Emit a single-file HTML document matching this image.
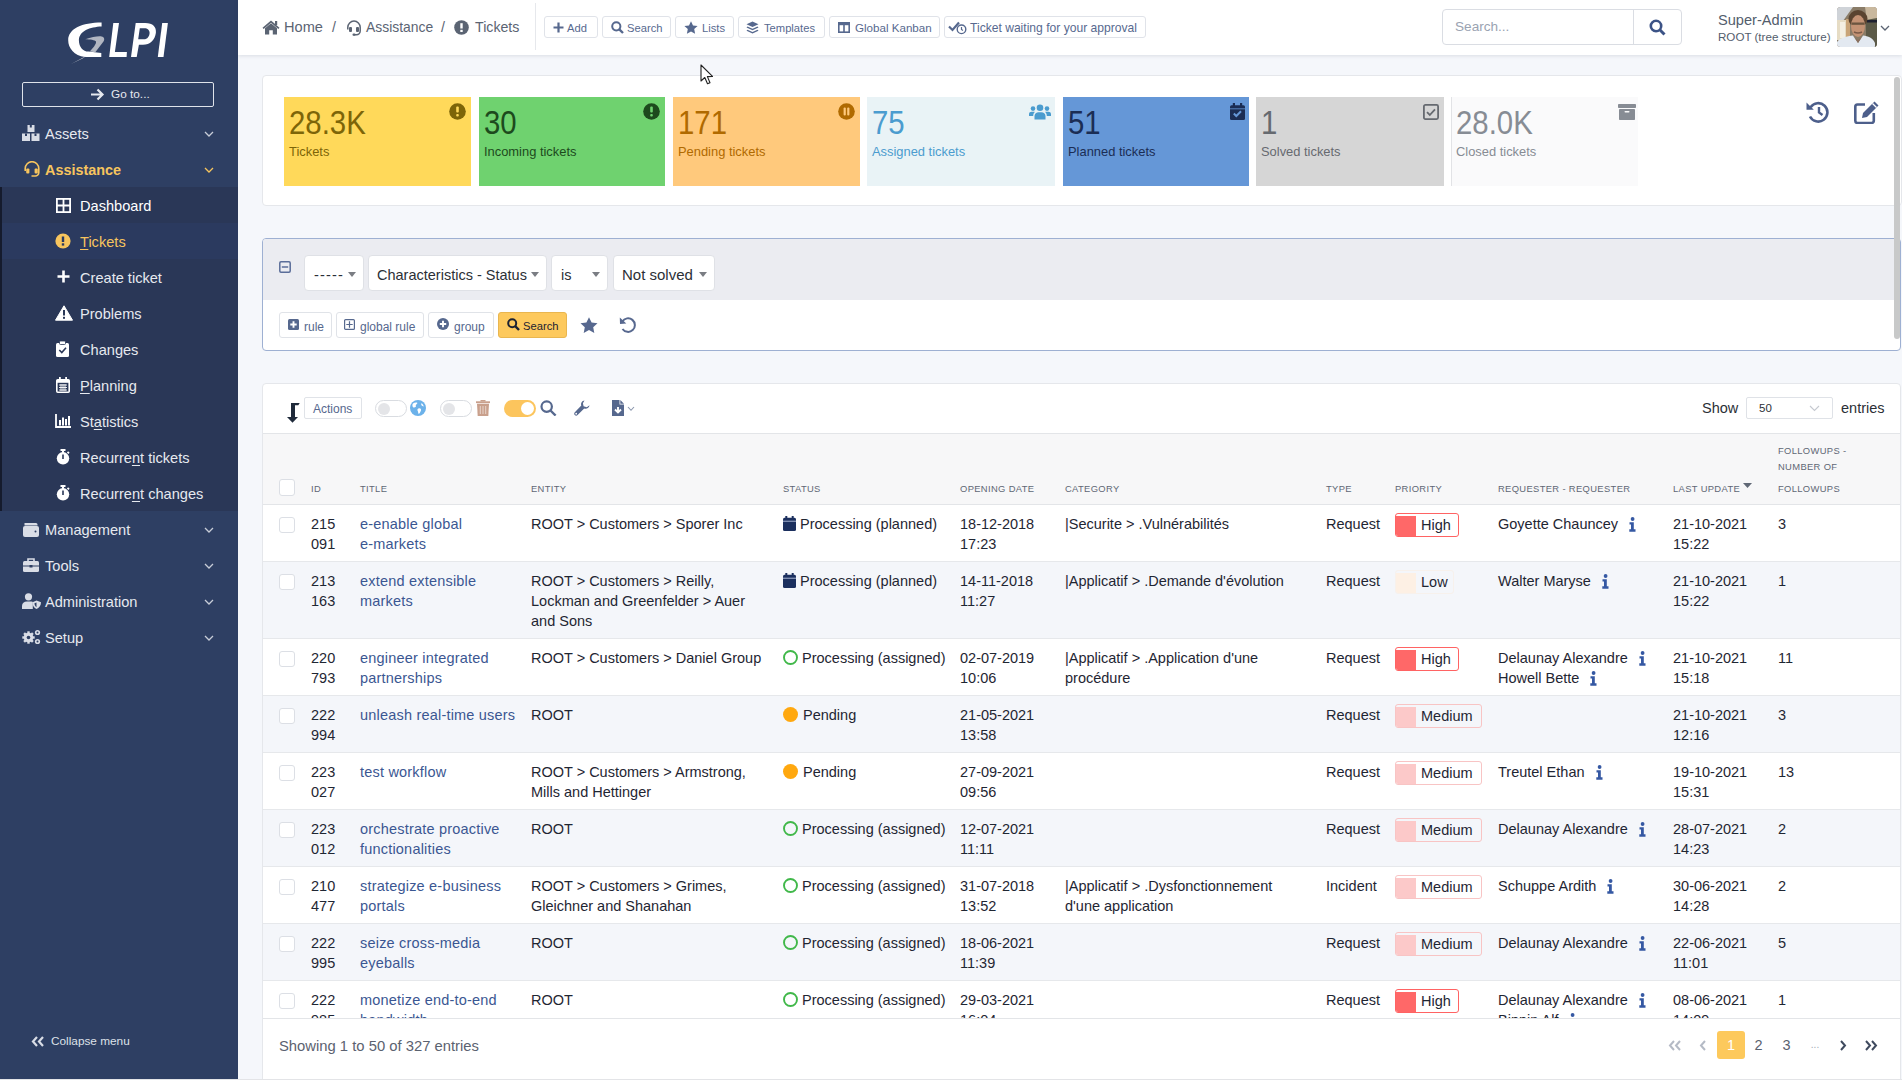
<!DOCTYPE html>
<html><head><meta charset="utf-8">
<style>
*{box-sizing:border-box;margin:0;padding:0}
html,body{width:1902px;height:1080px;overflow:hidden}
body{font-family:"Liberation Sans",sans-serif;background:#f5f7fb;position:relative;color:#1e293b}
svg{display:block;position:absolute}
.a{position:absolute;white-space:nowrap}
/* sidebar */
#sb{position:absolute;left:0;top:0;width:238px;height:1080px;background:#2e3f63;overflow:hidden}
#sb .it{position:absolute;left:0;width:238px;height:36px;color:#e6e9ef;font-size:14.6px;line-height:36px}
#sb .it svg{left:22px;top:10px}
#sb .it .tx{position:absolute;left:45px;top:1px}
#sb .it .chev{left:204px;top:16px}
#sub{position:absolute;left:0;top:187px;width:238px;height:324px;background:#2a3757}
#sub .strip{position:absolute;left:0;top:0;width:2px;height:324px;background:#151b2d;z-index:2}
#sub .it .tx{left:80px}
#sub .it svg{left:55px}
/* header */
#hd{position:absolute;left:238px;top:0;width:1664px;height:55px;background:#fff;box-shadow:0 1px 4px rgba(40,50,70,.13)}
.crumb{position:absolute;top:0;height:55px;line-height:55px;font-size:14.2px;color:#5b6473;white-space:nowrap}
.hbtn{position:absolute;top:16px;height:22px;border:1px solid #e0e3e9;border-radius:3px;background:#fff;color:#57698f;font-size:11.2px;line-height:20px;white-space:nowrap}
.hbtn span{position:absolute;top:1px}
/* cards */
.card{position:absolute;background:#fff;border:1px solid #e5e7eb;border-radius:4px}
.tile{position:absolute;top:97px;width:187px;height:89px}
.tile .num{position:absolute;left:5px;top:8px;font-size:29.5px;line-height:34px;white-space:nowrap}
.tile .lbl{position:absolute;left:5px;top:46.8px;font-size:12.9px;line-height:16px;white-space:nowrap}
.tile svg{left:164px;top:6px}
</style></head><body>
<div id="sb">
<svg style="left:60px;top:15px" width="120" height="55" viewBox="0 0 120 55">
<path fill="#fff" d="M41.6,7.6 L41.6,11.4 C30,11.8 19,16 18.9,25.2 C19,32 23,36.5 28.4,36.6 L41.3,37.9 L41.3,42 L25,42 C14,40.5 8.2,33 8.2,25.2 C8.2,14 22,7.6 41.6,7.6 Z"/>
<path fill="#c9ccd4" d="M27,40.6 L11,48.9 L22.5,43.4 Z"/>
<path fill="#b1b6c1" d="M25.2,24.3 C32,22 38,21 41.6,21.5 C44.5,22 44.8,24.5 43.5,26.5 L35.3,37.2 L29.7,36.6 C33,33 36.5,29 36,26.5 C35,25 30,24.5 25.2,24.3 Z"/>
<path fill="#fff" d="M53.3,7.9 L59,7.9 L54.9,36.9 L66.9,36.9 L66.6,42 L49.2,42 Z"/>
<path fill="#fff" fill-rule="evenodd" d="M75.7,7.9 L85.2,7.9 C93,7.9 96.5,12 95.9,17.7 C95,25 90,29.7 83,29.7 L78.9,29.7 L76.7,42 L71,42 Z M79.8,13.2 L78.2,24.3 L83.9,24.3 C87.5,24.3 89.6,21 89.6,17.7 C89.6,15 87.5,13.2 84.5,13.2 Z"/>
<path fill="#fff" d="M102.2,7.9 L107.9,7.9 L103.5,42 L97.8,42 Z"/>
</svg>
<div class="a" style="left:22px;top:82px;width:192px;height:25px;border:1px solid #dfe3ea;border-radius:2px"></div>
<svg style="left:89px;top:87px" width="16" height="15" viewBox="0 0 16 15"><path d="M2,7.5 H13 M8.5,2.5 L13.5,7.5 L8.5,12.5" stroke="#e6e9ef" stroke-width="2.2" fill="none"/></svg>
<div class="a" style="left:111px;top:82px;line-height:25px;font-size:11.8px;color:#e6e9ef">Go to...</div>

<div class="it" style="top:115px">
<svg width="18" height="16" viewBox="0 0 18 16" fill="#d9dde6"><rect x="5.5" y="0" width="7" height="7"/><rect x="0" y="8.5" width="8" height="7.5"/><rect x="9.5" y="8.5" width="8" height="7.5"/><rect x="7.8" y="0" width="2" height="2.5" fill="#2e3f63"/><rect x="3" y="8.5" width="2" height="2.5" fill="#2e3f63"/><rect x="12.5" y="8.5" width="2" height="2.5" fill="#2e3f63"/></svg>
<span class="tx">Assets</span>
<svg class="chev" width="10" height="6" viewBox="0 0 10 6"><path d="M1,1 L5,5 L9,1" stroke="#c8cdd8" stroke-width="1.3" fill="none"/></svg>
</div>
<div class="it" style="top:151px;color:#f7c55e;font-weight:bold;font-size:14.4px">
<svg width="18" height="16" viewBox="0 0 18 16" style="left:23px"><path d="M2.2,10 V7.5 A6.8,6.8 0 0 1 15.8,7.5 V11.5 A3.5,3.5 0 0 1 12.3,15 H8.5" stroke="#f7c55e" stroke-width="1.6" fill="none"/><rect x="3.2" y="7.5" width="3.2" height="5" rx="1" fill="#f7c55e"/><rect x="11.6" y="7.5" width="3.2" height="5" rx="1" fill="#f7c55e"/></svg>
<span class="tx">Assistance</span>
<svg class="chev" width="10" height="6" viewBox="0 0 10 6"><path d="M1,1 L5,5 L9,1" stroke="#f7c55e" stroke-width="1.3" fill="none"/></svg>
</div>

<div id="sub"><div class="strip"></div>
<div class="it" style="top:0px;color:#fff">
<svg width="16" height="16" viewBox="0 0 16 16" style="top:11px;left:56px"><rect x="0.9" y="0.9" width="13.2" height="13.2" stroke="#fff" stroke-width="1.8" fill="none"/><path d="M7.5,1 V14 M1,7.5 H14" stroke="#fff" stroke-width="1.8"/></svg>
<span class="tx">Dashboard</span></div>
<div class="it" style="top:36px;background:#2b3a5f;color:#f7c55e">
<svg width="16" height="16" viewBox="0 0 16 16" style="top:10px;left:55px"><circle cx="8" cy="8" r="7.6" fill="#f7c55e"/><rect x="6.8" y="3.5" width="2.4" height="5.5" fill="#2b3a5f"/><rect x="6.8" y="10.3" width="2.4" height="2.3" fill="#2b3a5f"/></svg>
<span class="tx"><u style="text-underline-offset:2px">T</u>ickets</span></div>
<div class="it" style="top:72px">
<svg width="16" height="16" viewBox="0 0 16 16" style="top:10px;left:56px"><path d="M7.5,1.5 V13.5 M1.5,7.5 H13.5" stroke="#fff" stroke-width="2.6"/></svg>
<span class="tx">Create ticket</span></div>
<div class="it" style="top:108px">
<svg width="18" height="16" viewBox="0 0 18 16" style="top:10px;left:55px"><path d="M9,0.8 L17.5,15.2 H0.5 Z" fill="#fff" stroke="#fff" stroke-width="1" stroke-linejoin="round"/><rect x="8" y="5" width="2" height="5.5" fill="#2a3757"/><rect x="8" y="11.8" width="2" height="2" fill="#2a3757"/></svg>
<span class="tx">Problems</span></div>
<div class="it" style="top:144px">
<svg width="14" height="16" viewBox="0 0 14 16" style="top:10px;left:56px"><rect x="0" y="2" width="13" height="14" rx="1.5" fill="#fff"/><rect x="3.5" y="0" width="6" height="3.5" rx="1" fill="#fff" stroke="#2a3757" stroke-width="0.8"/><path d="M3.3,9 L5.8,11.5 L10,6.8" stroke="#2a3757" stroke-width="1.6" fill="none"/></svg>
<span class="tx">Changes</span></div>
<div class="it" style="top:180px">
<svg width="14" height="16" viewBox="0 0 14 16" style="top:10px;left:56px"><rect x="0.8" y="2.8" width="12.4" height="12.4" rx="1" stroke="#fff" stroke-width="1.6" fill="none"/><rect x="0.8" y="2.8" width="12.4" height="3" fill="#fff"/><rect x="3" y="0" width="1.8" height="3.5" fill="#fff"/><rect x="9.2" y="0" width="1.8" height="3.5" fill="#fff"/><path d="M3,8 H11 M3,10.5 H11 M3,13 H11 M5,7 V14 M7,7 V14 M9,7 V14" stroke="#fff" stroke-width="0.9"/></svg>
<span class="tx"><u style="text-underline-offset:2px">P</u>lanning</span></div>
<div class="it" style="top:216px">
<svg width="16" height="14" viewBox="0 0 16 14" style="top:11px;left:55px"><path d="M1,0 V13 H16" stroke="#fff" stroke-width="1.8" fill="none"/><rect x="4" y="6" width="2" height="5.5" fill="#fff"/><rect x="7" y="3.5" width="2" height="8" fill="#fff"/><rect x="10" y="5" width="2" height="6.5" fill="#fff"/><rect x="13" y="2" width="2" height="9.5" fill="#fff"/></svg>
<span class="tx">St<u style="text-underline-offset:2px">a</u>tistics</span></div>
<div class="it" style="top:252px">
<svg width="14" height="16" viewBox="0 0 14 16" style="top:10px;left:56px"><circle cx="7" cy="9.3" r="6.2" fill="#fff"/><rect x="4.5" y="0" width="5" height="2" fill="#fff"/><rect x="6" y="1" width="2" height="3" fill="#fff"/><rect x="6.2" y="5.5" width="1.6" height="4.5" fill="#2a3757"/><path d="M11.5,2.8 L13,4.3" stroke="#fff" stroke-width="1.8"/></svg>
<span class="tx">Recurre<u style="text-underline-offset:2px">n</u>t tickets</span></div>
<div class="it" style="top:288px">
<svg width="14" height="16" viewBox="0 0 14 16" style="top:10px;left:56px"><circle cx="7" cy="9.3" r="6.2" fill="#fff"/><rect x="4.5" y="0" width="5" height="2" fill="#fff"/><rect x="6" y="1" width="2" height="3" fill="#fff"/><rect x="6.2" y="5.5" width="1.6" height="4.5" fill="#2a3757"/><path d="M11.5,2.8 L13,4.3" stroke="#fff" stroke-width="1.8"/></svg>
<span class="tx">Recurre<u style="text-underline-offset:2px">n</u>t changes</span></div>
</div>

<div class="it" style="top:511px">
<svg width="16" height="14" viewBox="0 0 16 14" style="top:12px;left:23px"><path d="M1.5,0 H13 A1.5,1.5 0 0 1 14.5,1.5 V2.5 H1.5 Z" fill="#d9dde6"/><rect x="0" y="3" width="16" height="11" rx="2" fill="#d9dde6"/><circle cx="12.5" cy="8.5" r="1" fill="#2e3f63"/></svg>
<span class="tx">Management</span>
<svg class="chev" width="10" height="6" viewBox="0 0 10 6"><path d="M1,1 L5,5 L9,1" stroke="#c8cdd8" stroke-width="1.3" fill="none"/></svg>
</div>
<div class="it" style="top:547px">
<svg width="16" height="14" viewBox="0 0 16 14" style="top:11px;left:23px"><path d="M5,3 V1 H11 V3" stroke="#d9dde6" stroke-width="1.6" fill="none"/><rect x="0" y="3" width="16" height="11" rx="1.5" fill="#d9dde6"/><path d="M0,8 H16" stroke="#2e3f63" stroke-width="1"/><rect x="6.5" y="7" width="3" height="2.5" fill="#2e3f63"/></svg>
<span class="tx">Tools</span>
<svg class="chev" width="10" height="6" viewBox="0 0 10 6"><path d="M1,1 L5,5 L9,1" stroke="#c8cdd8" stroke-width="1.3" fill="none"/></svg>
</div>
<div class="it" style="top:583px">
<svg width="19" height="16" viewBox="0 0 19 16" style="top:10px;left:22px"><circle cx="6.5" cy="3.8" r="3.6" fill="#d9dde6"/><path d="M0,16 V13 C0,10 2,8.5 5,8.5 H9 C10,8.5 10.5,8.8 10.8,9 V16 Z" fill="#d9dde6"/><path d="M14.5,7.5 L19,9.3 C19,13 17,15 14.5,16 C12,15 10.5,13 10.5,9.3 Z" fill="#d9dde6"/><path d="M14.5,9.5 V14.3 C13.3,13.5 12.5,12 12.5,10.3 Z" fill="#2e3f63"/></svg>
<span class="tx">Administration</span>
<svg class="chev" width="10" height="6" viewBox="0 0 10 6"><path d="M1,1 L5,5 L9,1" stroke="#c8cdd8" stroke-width="1.3" fill="none"/></svg>
</div>
<div class="it" style="top:619px">
<svg width="19" height="16" viewBox="0 0 19 16" style="top:10px;left:22px"><g fill="#d9dde6"><circle cx="6.5" cy="8.5" r="4.8"/><rect x="5.3" y="2.3" width="2.4" height="12.4"/><rect x="0.3" y="7.3" width="12.4" height="2.4"/><rect x="5.3" y="2.3" width="2.4" height="12.4" transform="rotate(45 6.5 8.5)"/><rect x="5.3" y="2.3" width="2.4" height="12.4" transform="rotate(-45 6.5 8.5)"/><circle cx="15.5" cy="3.5" r="2.6"/><circle cx="15.5" cy="12.5" r="2.6"/></g><circle cx="6.5" cy="8.5" r="1.8" fill="#2e3f63"/><circle cx="15.5" cy="3.5" r="1" fill="#2e3f63"/><circle cx="15.5" cy="12.5" r="1" fill="#2e3f63"/></svg>
<span class="tx">Setup</span>
<svg class="chev" width="10" height="6" viewBox="0 0 10 6"><path d="M1,1 L5,5 L9,1" stroke="#c8cdd8" stroke-width="1.3" fill="none"/></svg>
</div>

<svg style="left:31px;top:1036px" width="14" height="11" viewBox="0 0 14 11"><path d="M6,1 L2,5.5 L6,10 M12,1 L8,5.5 L12,10" stroke="#d9dde6" stroke-width="2.2" fill="none"/></svg>
<div class="a" style="left:51px;top:1032px;line-height:18px;font-size:11.8px;color:#dde1e8">Collapse menu</div>
</div>
<div id="hd"></div>
<!-- breadcrumbs -->
<svg style="left:262px;top:20px" width="18" height="15" viewBox="0 0 18 15"><path d="M9,0.5 L17.5,7.8 L16.3,9 L9,2.8 L1.7,9 L0.5,7.8 Z" fill="#5b6473"/><path d="M3,8.3 L9,3.3 L15,8.3 V14.5 H10.8 V10.3 H7.2 V14.5 H3 Z" fill="#5b6473"/><rect x="13" y="1" width="2.2" height="4" fill="#5b6473"/></svg>
<div class="crumb" style="left:284px;font-size:14.6px">Home</div>
<div class="crumb" style="left:332px">/</div>
<svg style="left:346px;top:20px" width="16" height="16" viewBox="0 0 16 16"><path d="M1.8,9.5 V7.3 A6.2,6.2 0 0 1 14.2,7.3 V11 A3.8,3.8 0 0 1 10.4,14.8 H7.5" stroke="#5b6473" stroke-width="1.5" fill="none"/><rect x="3" y="7" width="3" height="5" rx="1" fill="#5b6473"/><rect x="10" y="7" width="3" height="5" rx="1" fill="#5b6473"/><rect x="6.5" y="13.5" width="3" height="2.2" rx="1" fill="#5b6473"/></svg>
<div class="crumb" style="left:366px;font-size:13.9px">Assistance</div>
<div class="crumb" style="left:441px">/</div>
<svg style="left:454px;top:20px" width="15" height="15" viewBox="0 0 15 15"><circle cx="7.5" cy="7.5" r="7.3" fill="#5b6473"/><rect x="6.3" y="3.2" width="2.4" height="5.3" fill="#fff"/><rect x="6.3" y="9.8" width="2.4" height="2.2" fill="#fff"/></svg>
<div class="crumb" style="left:475px">Tickets</div>
<div class="a" style="left:535px;top:3px;width:1px;height:47px;background:#e6e8ec"></div>

<div class="hbtn" style="left:544px;width:54px"><span style="left:22px">Add</span></div>
<svg style="left:553px;top:22px" width="11" height="11" viewBox="0 0 11 11"><path d="M5.5,0.5 V10.5 M0.5,5.5 H10.5" stroke="#56688e" stroke-width="2.2"/></svg>
<div class="hbtn" style="left:602px;width:69px"><span style="left:24px">Search</span></div>
<svg style="left:611px;top:21px" width="13" height="13" viewBox="0 0 13 13"><circle cx="5.3" cy="5.3" r="4.1" stroke="#56688e" stroke-width="2" fill="none"/><path d="M8.3,8.3 L12,12" stroke="#56688e" stroke-width="2.4"/></svg>
<div class="hbtn" style="left:675px;width:59px"><span style="left:26px">Lists</span></div>
<svg style="left:684px;top:21px" width="14" height="13" viewBox="0 0 14 13"><path d="M7,0.3 L9,4.5 L13.6,5 L10.2,8.1 L11.1,12.7 L7,10.4 L2.9,12.7 L3.8,8.1 L0.4,5 L5,4.5 Z" fill="#56688e"/></svg>
<div class="hbtn" style="left:738px;width:87px"><span style="left:25px">Templates</span></div>
<svg style="left:746px;top:21px" width="13" height="13" viewBox="0 0 13 13"><path d="M6.5,0.5 L12.5,3.3 L6.5,6.1 L0.5,3.3 Z" fill="#56688e"/><path d="M1.5,5.5 L6.5,7.8 L11.5,5.5 L12.5,6.5 L6.5,9.3 L0.5,6.5 Z" fill="#56688e"/><path d="M1.5,8.7 L6.5,11 L11.5,8.7 L12.5,9.7 L6.5,12.5 L0.5,9.7 Z" fill="#56688e"/></svg>
<div class="hbtn" style="left:829px;width:111px"><span style="left:25px;font-size:11.6px">Global Kanban</span></div>
<svg style="left:838px;top:22px" width="12" height="11" viewBox="0 0 12 11"><rect x="0.8" y="0.8" width="10.4" height="9.4" stroke="#56688e" stroke-width="1.6" fill="none"/><path d="M6,1 V10" stroke="#56688e" stroke-width="1.6"/><rect x="0.8" y="0.8" width="10.4" height="2.4" fill="#56688e"/></svg>
<div class="hbtn" style="left:944px;width:202px"><span style="left:25px;font-size:12.1px">Ticket waiting for your approval</span></div>
<svg style="left:948px;top:20px" width="20" height="15" viewBox="0 0 20 15"><path d="M1,6.5 L4.5,10 L11,2.5" stroke="#56688e" stroke-width="2.2" fill="none"/><circle cx="13.5" cy="9.3" r="4.3" stroke="#56688e" stroke-width="1.4" fill="#fff"/><path d="M13.5,7 V9.5 L15,10.5" stroke="#56688e" stroke-width="1.2" fill="none"/></svg>

<!-- global search -->
<div class="a" style="left:1442px;top:9px;width:240px;height:36px;border:1px solid #dadde3;border-radius:4px;background:#fff"></div>
<div class="a" style="left:1633px;top:10px;width:1px;height:34px;background:#dadde3"></div>
<div class="a" style="left:1455px;top:9px;line-height:36px;font-size:13.6px;color:#9aa3b2">Search...</div>
<svg style="left:1649px;top:19px" width="17" height="17" viewBox="0 0 17 17"><circle cx="7" cy="7" r="5.2" stroke="#3c5386" stroke-width="2.6" fill="none"/><path d="M10.8,10.8 L15.5,15.5" stroke="#3c5386" stroke-width="3"/></svg>
<div class="a" style="left:1718px;top:10px;line-height:20px;font-size:14.6px;color:#535d6c">Super-Admin</div>
<div class="a" style="left:1718px;top:27.5px;line-height:17px;font-size:11.6px;color:#535d6c">ROOT (tree structure)</div>
<svg style="left:1837px;top:7px" width="40" height="40" viewBox="0 0 40 40">
<defs><clipPath id="av"><rect width="40" height="40" rx="3.5"/></clipPath></defs>
<g clip-path="url(#av)">
<rect width="40" height="40" fill="#8a7c68"/>
<path d="M0,0 H16 L6,14 L0,16 Z" fill="#cfd3d8"/>
<rect x="0" y="13" width="12" height="20" fill="#e6dcc4"/>
<rect x="3" y="15" width="5" height="16" fill="#f4efe2"/>
<rect x="9" y="12" width="4" height="22" fill="#c9a478"/>
<path d="M28,0 H40 V12 L30,14 Z" fill="#c9b89e"/>
<path d="M29,13 L40,11 V40 H29 Z" fill="#5c5a48"/>
<rect x="30" y="13" width="10" height="2.5" fill="#1e2030"/>
<ellipse cx="21" cy="12" rx="9.5" ry="9" fill="#5a4430"/>
<ellipse cx="21" cy="19" rx="7" ry="11" fill="#c39274"/>
<rect x="14.5" y="15.5" width="13" height="2.3" fill="#6b5540"/>
<path d="M17,25 Q21,27 25,25" stroke="#7a5a48" stroke-width="1.6" fill="none"/>
<path d="M0,40 V35 C3,31 10,29 16,28.5 L21,36 L26,28.5 C31,29 36,31 38,36 V40 Z" fill="#e3e9f1"/>
<path d="M16,28.5 L21,36 L26,28.5 L24,31 L21,33 L18,31 Z" fill="#8a7060"/>
</g></svg>
<svg style="left:1880px;top:25px" width="10" height="6" viewBox="0 0 10 6"><path d="M1,1 L5,5 L9,1" stroke="#5b6473" stroke-width="1.3" fill="none"/></svg>
<div class="card" style="left:262px;top:75px;width:1640px;height:131px"></div>
<style>
.tile .num{transform:scaleX(.89);transform-origin:0 0;font-size:33px;left:5px;top:7.5px;line-height:36px}
</style>
<div class="tile" style="left:284px;background:#ffd95a;color:#7d6508"><div class="num">28.3K</div><div class="lbl">Tickets</div>
<svg style="left:165px;top:6px" width="17" height="17" viewBox="0 0 17 17"><circle cx="8.5" cy="8.5" r="8.3" fill="#7d6508"/><rect x="7.2" y="3.6" width="2.6" height="6" rx="1" fill="#ffd95a"/><rect x="7.2" y="11" width="2.6" height="2.4" rx="1" fill="#ffd95a"/></svg></div>
<div class="tile" style="left:479px;width:186px;background:#6fd26f;color:#1d4a1d"><div class="num">30</div><div class="lbl">Incoming tickets</div>
<svg style="left:164px;top:6px" width="17" height="17" viewBox="0 0 17 17"><circle cx="8.5" cy="8.5" r="8.3" fill="#1d4a1d"/><rect x="7.2" y="3.6" width="2.6" height="6" rx="1" fill="#6fd26f"/><rect x="7.2" y="11" width="2.6" height="2.4" rx="1" fill="#6fd26f"/></svg></div>
<div class="tile" style="left:673px;background:#ffc97c;color:#b06a00"><div class="num">171</div><div class="lbl">Pending tickets</div>
<svg style="left:165px;top:6px" width="17" height="17" viewBox="0 0 17 17"><circle cx="8.5" cy="8.5" r="8.3" fill="#b06a00"/><rect x="5.6" y="4.6" width="2.2" height="7.8" rx="1" fill="#ffc97c"/><rect x="9.2" y="4.6" width="2.2" height="7.8" rx="1" fill="#ffc97c"/></svg></div>
<div class="tile" style="left:867px;width:188px;background:#e9f3f6;color:#4b9ccf"><div class="num">75</div><div class="lbl">Assigned tickets</div>
<svg style="left:162px;top:7px" width="22" height="16" viewBox="0 0 22 16" fill="#4b9ccf"><circle cx="11" cy="3.8" r="3.3"/><circle cx="4" cy="4.6" r="2.3"/><circle cx="18" cy="4.6" r="2.3"/><path d="M5.5,15.5 V12 C5.5,9.5 7.5,8.2 9.5,8.2 H12.5 C14.5,8.2 16.5,9.5 16.5,12 V15.5 Z"/><path d="M0,12 V10.3 C0,8.5 1.3,7.8 2.6,7.8 H4.8 C5.2,7.8 5.6,7.9 5.9,8.1 C4.7,9 4.2,10.3 4.2,12 Z"/><path d="M22,12 V10.3 C22,8.5 20.7,7.8 19.4,7.8 H17.2 C16.8,7.8 16.4,7.9 16.1,8.1 C17.3,9 17.8,10.3 17.8,12 Z"/></svg></div>
<div class="tile" style="left:1063px;width:186px;background:#6597d7;color:#1b2d54"><div class="num">51</div><div class="lbl">Planned tickets</div>
<svg style="left:167px;top:6px" width="15" height="17" viewBox="0 0 15 17"><rect x="0" y="2.3" width="15" height="14.7" rx="1.5" fill="#1b2d54"/><rect x="2.8" y="0" width="2.2" height="3.5" fill="#1b2d54"/><rect x="10" y="0" width="2.2" height="3.5" fill="#1b2d54"/><path d="M0,5.8 H15" stroke="#6597d7" stroke-width="0.8"/><path d="M3.8,10.5 L6.3,13 L11,8.3" stroke="#6597d7" stroke-width="2" fill="none"/></svg></div>
<div class="tile" style="left:1256px;width:188px;background:#d6d6d6;color:#666a70"><div class="num">1</div><div class="lbl">Solved tickets</div>
<svg style="left:167px;top:7px" width="16" height="16" viewBox="0 0 16 16"><rect x="0.9" y="0.9" width="14.2" height="14.2" rx="1.5" stroke="#666a70" stroke-width="1.8" fill="none"/><path d="M4,8.2 L6.8,11 L12,5.3" stroke="#666a70" stroke-width="1.8" fill="none"/></svg></div>
<div class="tile" style="left:1451px;background:#fafafb;color:#878c94;border-left:1px solid #e2e3e6"><div class="num" style="left:4px">28.0K</div><div class="lbl" style="left:4px">Closed tickets</div>
<svg style="left:166px;top:7px" width="18" height="16" viewBox="0 0 18 16"><rect x="0" y="0" width="18" height="4" rx="0.8" fill="#878c94"/><rect x="1" y="5" width="16" height="11" rx="0.8" fill="#878c94"/><rect x="6.5" y="7" width="5" height="1.6" rx="0.8" fill="#fafafb"/></svg></div>
<svg style="left:1806px;top:101px" width="24" height="22" viewBox="0 0 24 22"><path d="M4.6,6.2 A9.2,9.2 0 1 1 4,15.5" stroke="#4d5f8b" stroke-width="2.6" fill="none"/><path d="M0.5,1.5 L7.8,8.8 L0.5,8.8 Z" fill="#4d5f8b"/><path d="M13,6 V11.5 L16.5,14" stroke="#4d5f8b" stroke-width="2.4" fill="none"/></svg>
<svg style="left:1854px;top:100px" width="26" height="24" viewBox="0 0 26 24"><path d="M11,4.5 H3.5 A2.3,2.3 0 0 0 1.3,6.8 V20.7 A2.3,2.3 0 0 0 3.5,23 H17.5 A2.3,2.3 0 0 0 19.8,20.7 V13" stroke="#4d5f8b" stroke-width="2.6" fill="none"/><path d="M20.5,1.5 L24.5,5.5 L13,17 L8,18 L9,13 Z" fill="#4d5f8b"/><path d="M18.5,3.5 L22.5,7.5" stroke="#fff" stroke-width="1.2"/></svg>
<div class="a" style="left:262px;top:238px;width:1639px;height:113px;border:1px solid #9eb0d2;border-radius:4px;background:#fff;overflow:hidden">
<div class="a" style="left:0;top:0;width:1639px;height:61px;background:#ebecf1"></div>
</div>
<svg style="left:279px;top:261px" width="12" height="12" viewBox="0 0 12 12"><rect x="0.8" y="0.8" width="10.4" height="10.4" rx="1.2" stroke="#5a6d99" stroke-width="1.5" fill="none"/><path d="M2.8,6 H9.2" stroke="#5a6d99" stroke-width="1.5"/></svg>
<style>
.sel{position:absolute;top:255px;height:36px;background:#fff;border:1px solid #dfe1e6;border-radius:4px;font-size:14.5px;line-height:34px;color:#2b2f36;white-space:nowrap}
.sel span{position:absolute;top:2px}
.sel i{position:absolute;top:16px;width:0;height:0;border-left:4px solid transparent;border-right:4px solid transparent;border-top:5px solid #7a7d83}
.sbtn{position:absolute;top:312px;height:26px;background:#fff;border:1px solid #e0e3e8;border-radius:3px;font-size:12px;line-height:24px;color:#56688e;white-space:nowrap}
.sbtn span{position:absolute;top:1.5px}
</style>
<div class="sel" style="left:304px;width:60px"><span style="left:9px;top:2px;letter-spacing:1.2px">-----</span><i style="left:43px"></i></div>
<div class="sel" style="left:368px;width:179px"><span style="left:8px">Characteristics - Status</span><i style="left:162px"></i></div>
<div class="sel" style="left:551px;width:57px"><span style="left:9px">is</span><i style="left:40px"></i></div>
<div class="sel" style="left:613px;width:102px"><span style="left:8px;font-size:15px">Not solved</span><i style="left:85px"></i></div>

<div class="sbtn" style="left:279px;width:53px"><span style="left:24px">rule</span></div>
<svg style="left:288px;top:319px" width="11" height="11" viewBox="0 0 11 11"><rect x="0" y="0" width="11" height="11" rx="1.5" fill="#56688e"/><path d="M5.5,2.3 V8.7 M2.3,5.5 H8.7" stroke="#fff" stroke-width="1.9"/></svg>
<div class="sbtn" style="left:336px;width:88px"><span style="left:23px">global rule</span></div>
<svg style="left:344px;top:319px" width="11" height="11" viewBox="0 0 11 11"><rect x="0.6" y="0.6" width="9.8" height="9.8" rx="1" stroke="#56688e" stroke-width="1.2" fill="none"/><path d="M5.5,2.3 V8.7 M2.3,5.5 H8.7" stroke="#56688e" stroke-width="1.2"/></svg>
<div class="sbtn" style="left:428px;width:66px"><span style="left:25px">group</span></div>
<svg style="left:437px;top:318px" width="12" height="12" viewBox="0 0 12 12"><circle cx="6" cy="6" r="6" fill="#56688e"/><path d="M6,2.8 V9.2 M2.8,6 H9.2" stroke="#fff" stroke-width="1.9"/></svg>
<div class="sbtn" style="left:498px;width:69px;background:#fdc95d;border-color:#e9b650;color:#1c2232"><span style="left:24px;top:0.5px;font-size:11.2px">Search</span></div>
<svg style="left:507px;top:318px" width="13" height="13" viewBox="0 0 13 13"><circle cx="5.2" cy="5.2" r="4" stroke="#1c2232" stroke-width="2" fill="none"/><path d="M8.2,8.2 L12,12" stroke="#1c2232" stroke-width="2.4"/></svg>
<svg style="left:580px;top:317px" width="18" height="16" viewBox="0 0 18 16"><path d="M9,0.3 L11.6,5.6 L17.5,6.3 L13.2,10.2 L14.3,16 L9,13.1 L3.7,16 L4.8,10.2 L0.5,6.3 L6.4,5.6 Z" fill="#57688f"/></svg>
<svg style="left:619px;top:317px" width="17" height="16" viewBox="0 0 17 16"><path d="M3.3,4.5 A6.8,6.8 0 1 1 3.5,12" stroke="#57688f" stroke-width="2" fill="none"/><path d="M0.8,0.5 L1,7 L7.3,6.5 Z" fill="#57688f"/></svg>
<div class="card" style="left:262px;top:383px;width:1639px;height:697px;border-radius:4px 4px 0 0"></div>
<style>
.tc{position:absolute;font-size:14.5px;line-height:20px;color:#1f2633;white-space:nowrap}
.tl{color:#3b5792;letter-spacing:.2px}
.th{position:absolute;font-size:9.4px;line-height:14px;color:#5f6775;letter-spacing:.35px;white-space:nowrap}
.cb{position:absolute;width:16px;height:16px;border:1px solid #dcdfe5;border-radius:3px;background:#fff}
.ii{position:absolute;width:7px;height:15px}
</style>

<div class="a" style="left:263px;top:433px;width:1637px;height:72px;background:#f7f7f8;border-top:1px solid #e3e5e8;border-bottom:1px solid #e3e5e8"></div>
<div class="a" style="left:263px;top:505px;width:1637px;height:513px;overflow:hidden">
<div class="a" style="left:0;top:0px;width:1637px;height:57px;background:#fff;border-bottom:1px solid #e6e8eb"></div>
<div class="cb" style="left:16px;top:12px"></div>
<div class="tc" style="left:48px;top:9px;">215<br>091</div>
<div class="tc tl" style="left:97px;top:9px;">e-enable global<br>e-markets</div>
<div class="tc" style="left:268px;top:9px;">ROOT &gt; Customers &gt; Sporer Inc</div>
<svg style="left:520px;top:11px" width="13" height="15" viewBox="0 0 13 15"><rect x="0" y="1.8" width="13" height="13.2" rx="1.5" fill="#1b2f5e"/><rect x="2.3" y="0" width="2" height="3" fill="#1b2f5e"/><rect x="8.7" y="0" width="2" height="3" fill="#1b2f5e"/><rect x="0" y="4.6" width="13" height="1.4" fill="#7e8db0"/></svg>
<div class="tc" style="left:537px;top:9px;">Processing (planned)</div>
<div class="tc" style="left:697px;top:9px;">18-12-2018<br>17:23</div>
<div class="tc" style="left:802px;top:9px;">|Securite &gt; .Vulnérabilités</div>
<div class="tc" style="left:1063px;top:9px;">Request</div>
<div class="a" style="left:1132px;top:8px;width:64px;height:24px;border:1px solid #ff6363;border-radius:3px;overflow:hidden"><div class="a" style="left:0;top:2px;width:20px;height:21px;background:#ff6868"></div></div>
<div class="tc" style="left:1158px;top:10px;">High</div>
<div class="tc" style="left:1235px;top:9px;">Goyette Chauncey</div>
<svg class="ii" style="left:1366px;top:12px" width="7" height="15" viewBox="0 0 7 15"><circle cx="3.6" cy="2" r="1.9" fill="#3558a3"/><path d="M0.5,5.3 H4.8 V12.3 H6.5 V14.8 H0.3 V12.3 H2 V7.6 H0.5 Z" fill="#3558a3"/></svg>
<div class="tc" style="left:1410px;top:9px;">21-10-2021<br>15:22</div>
<div class="tc" style="left:1515px;top:9px;">3</div>
<div class="a" style="left:0;top:57px;width:1637px;height:77px;background:#f4f6fa;border-bottom:1px solid #e6e8eb"></div>
<div class="cb" style="left:16px;top:69px"></div>
<div class="tc" style="left:48px;top:66px;">213<br>163</div>
<div class="tc tl" style="left:97px;top:66px;">extend extensible<br>markets</div>
<div class="tc" style="left:268px;top:66px;">ROOT &gt; Customers &gt; Reilly,<br>Lockman and Greenfelder &gt; Auer<br>and Sons</div>
<svg style="left:520px;top:68px" width="13" height="15" viewBox="0 0 13 15"><rect x="0" y="1.8" width="13" height="13.2" rx="1.5" fill="#1b2f5e"/><rect x="2.3" y="0" width="2" height="3" fill="#1b2f5e"/><rect x="8.7" y="0" width="2" height="3" fill="#1b2f5e"/><rect x="0" y="4.6" width="13" height="1.4" fill="#7e8db0"/></svg>
<div class="tc" style="left:537px;top:66px;">Processing (planned)</div>
<div class="tc" style="left:697px;top:66px;">14-11-2018<br>11:27</div>
<div class="tc" style="left:802px;top:66px;">|Applicatif &gt; .Demande d'évolution</div>
<div class="tc" style="left:1063px;top:66px;">Request</div>
<div class="a" style="left:1132px;top:65px;width:59px;height:24px;border:1px solid #f7f1ec;border-radius:3px;overflow:hidden"><div class="a" style="left:0;top:2px;width:20px;height:21px;background:#fdf0e4"></div></div>
<div class="tc" style="left:1158px;top:67px;">Low</div>
<div class="tc" style="left:1235px;top:66px;">Walter Maryse</div>
<svg class="ii" style="left:1339px;top:69px" width="7" height="15" viewBox="0 0 7 15"><circle cx="3.6" cy="2" r="1.9" fill="#3558a3"/><path d="M0.5,5.3 H4.8 V12.3 H6.5 V14.8 H0.3 V12.3 H2 V7.6 H0.5 Z" fill="#3558a3"/></svg>
<div class="tc" style="left:1410px;top:66px;">21-10-2021<br>15:22</div>
<div class="tc" style="left:1515px;top:66px;">1</div>
<div class="a" style="left:0;top:134px;width:1637px;height:57px;background:#fff;border-bottom:1px solid #e6e8eb"></div>
<div class="cb" style="left:16px;top:146px"></div>
<div class="tc" style="left:48px;top:143px;">220<br>793</div>
<div class="tc tl" style="left:97px;top:143px;">engineer integrated<br>partnerships</div>
<div class="tc" style="left:268px;top:143px;">ROOT &gt; Customers &gt; Daniel Group</div>
<svg style="left:520px;top:145px" width="15" height="15" viewBox="0 0 15 15"><circle cx="7.5" cy="7.5" r="6.5" stroke="#41b84a" stroke-width="1.9" fill="none"/></svg>
<div class="tc" style="left:539px;top:143px;">Processing (assigned)</div>
<div class="tc" style="left:697px;top:143px;">02-07-2019<br>10:06</div>
<div class="tc" style="left:802px;top:143px;">|Applicatif &gt; .Application d'une<br>procédure</div>
<div class="tc" style="left:1063px;top:143px;">Request</div>
<div class="a" style="left:1132px;top:142px;width:64px;height:24px;border:1px solid #ff6363;border-radius:3px;overflow:hidden"><div class="a" style="left:0;top:2px;width:20px;height:21px;background:#ff6868"></div></div>
<div class="tc" style="left:1158px;top:144px;">High</div>
<div class="tc" style="left:1235px;top:143px;">Delaunay Alexandre</div>
<svg class="ii" style="left:1376px;top:146px" width="7" height="15" viewBox="0 0 7 15"><circle cx="3.6" cy="2" r="1.9" fill="#3558a3"/><path d="M0.5,5.3 H4.8 V12.3 H6.5 V14.8 H0.3 V12.3 H2 V7.6 H0.5 Z" fill="#3558a3"/></svg>
<div class="tc" style="left:1235px;top:163px;">Howell Bette</div>
<svg class="ii" style="left:1327px;top:166px" width="7" height="15" viewBox="0 0 7 15"><circle cx="3.6" cy="2" r="1.9" fill="#3558a3"/><path d="M0.5,5.3 H4.8 V12.3 H6.5 V14.8 H0.3 V12.3 H2 V7.6 H0.5 Z" fill="#3558a3"/></svg>
<div class="tc" style="left:1410px;top:143px;">21-10-2021<br>15:18</div>
<div class="tc" style="left:1515px;top:143px;">11</div>
<div class="a" style="left:0;top:191px;width:1637px;height:57px;background:#f4f6fa;border-bottom:1px solid #e6e8eb"></div>
<div class="cb" style="left:16px;top:203px"></div>
<div class="tc" style="left:48px;top:200px;">222<br>994</div>
<div class="tc tl" style="left:97px;top:200px;">unleash real-time users</div>
<div class="tc" style="left:268px;top:200px;">ROOT</div>
<svg style="left:520px;top:202px" width="15" height="15" viewBox="0 0 15 15"><circle cx="7.5" cy="7.5" r="7.5" fill="#ffa80f"/></svg>
<div class="tc" style="left:540px;top:200px;">Pending</div>
<div class="tc" style="left:697px;top:200px;">21-05-2021<br>13:58</div>
<div class="tc" style="left:1063px;top:200px;">Request</div>
<div class="a" style="left:1132px;top:199px;width:87px;height:24px;border:1px solid #f8c4c4;border-radius:3px;overflow:hidden"><div class="a" style="left:0;top:2px;width:20px;height:21px;background:#fcc9c9"></div></div>
<div class="tc" style="left:1158px;top:201px;">Medium</div>
<div class="tc" style="left:1410px;top:200px;">21-10-2021<br>12:16</div>
<div class="tc" style="left:1515px;top:200px;">3</div>
<div class="a" style="left:0;top:248px;width:1637px;height:57px;background:#fff;border-bottom:1px solid #e6e8eb"></div>
<div class="cb" style="left:16px;top:260px"></div>
<div class="tc" style="left:48px;top:257px;">223<br>027</div>
<div class="tc tl" style="left:97px;top:257px;">test workflow</div>
<div class="tc" style="left:268px;top:257px;">ROOT &gt; Customers &gt; Armstrong,<br>Mills and Hettinger</div>
<svg style="left:520px;top:259px" width="15" height="15" viewBox="0 0 15 15"><circle cx="7.5" cy="7.5" r="7.5" fill="#ffa80f"/></svg>
<div class="tc" style="left:540px;top:257px;">Pending</div>
<div class="tc" style="left:697px;top:257px;">27-09-2021<br>09:56</div>
<div class="tc" style="left:1063px;top:257px;">Request</div>
<div class="a" style="left:1132px;top:256px;width:87px;height:24px;border:1px solid #f8c4c4;border-radius:3px;overflow:hidden"><div class="a" style="left:0;top:2px;width:20px;height:21px;background:#fcc9c9"></div></div>
<div class="tc" style="left:1158px;top:258px;">Medium</div>
<div class="tc" style="left:1235px;top:257px;">Treutel Ethan</div>
<svg class="ii" style="left:1333px;top:260px" width="7" height="15" viewBox="0 0 7 15"><circle cx="3.6" cy="2" r="1.9" fill="#3558a3"/><path d="M0.5,5.3 H4.8 V12.3 H6.5 V14.8 H0.3 V12.3 H2 V7.6 H0.5 Z" fill="#3558a3"/></svg>
<div class="tc" style="left:1410px;top:257px;">19-10-2021<br>15:31</div>
<div class="tc" style="left:1515px;top:257px;">13</div>
<div class="a" style="left:0;top:305px;width:1637px;height:57px;background:#f4f6fa;border-bottom:1px solid #e6e8eb"></div>
<div class="cb" style="left:16px;top:317px"></div>
<div class="tc" style="left:48px;top:314px;">223<br>012</div>
<div class="tc tl" style="left:97px;top:314px;">orchestrate proactive<br>functionalities</div>
<div class="tc" style="left:268px;top:314px;">ROOT</div>
<svg style="left:520px;top:316px" width="15" height="15" viewBox="0 0 15 15"><circle cx="7.5" cy="7.5" r="6.5" stroke="#41b84a" stroke-width="1.9" fill="none"/></svg>
<div class="tc" style="left:539px;top:314px;">Processing (assigned)</div>
<div class="tc" style="left:697px;top:314px;">12-07-2021<br>11:11</div>
<div class="tc" style="left:1063px;top:314px;">Request</div>
<div class="a" style="left:1132px;top:313px;width:87px;height:24px;border:1px solid #f8c4c4;border-radius:3px;overflow:hidden"><div class="a" style="left:0;top:2px;width:20px;height:21px;background:#fcc9c9"></div></div>
<div class="tc" style="left:1158px;top:315px;">Medium</div>
<div class="tc" style="left:1235px;top:314px;">Delaunay Alexandre</div>
<svg class="ii" style="left:1376px;top:317px" width="7" height="15" viewBox="0 0 7 15"><circle cx="3.6" cy="2" r="1.9" fill="#3558a3"/><path d="M0.5,5.3 H4.8 V12.3 H6.5 V14.8 H0.3 V12.3 H2 V7.6 H0.5 Z" fill="#3558a3"/></svg>
<div class="tc" style="left:1410px;top:314px;">28-07-2021<br>14:23</div>
<div class="tc" style="left:1515px;top:314px;">2</div>
<div class="a" style="left:0;top:362px;width:1637px;height:57px;background:#fff;border-bottom:1px solid #e6e8eb"></div>
<div class="cb" style="left:16px;top:374px"></div>
<div class="tc" style="left:48px;top:371px;">210<br>477</div>
<div class="tc tl" style="left:97px;top:371px;">strategize e-business<br>portals</div>
<div class="tc" style="left:268px;top:371px;">ROOT &gt; Customers &gt; Grimes,<br>Gleichner and Shanahan</div>
<svg style="left:520px;top:373px" width="15" height="15" viewBox="0 0 15 15"><circle cx="7.5" cy="7.5" r="6.5" stroke="#41b84a" stroke-width="1.9" fill="none"/></svg>
<div class="tc" style="left:539px;top:371px;">Processing (assigned)</div>
<div class="tc" style="left:697px;top:371px;">31-07-2018<br>13:52</div>
<div class="tc" style="left:802px;top:371px;">|Applicatif &gt; .Dysfonctionnement<br>d'une application</div>
<div class="tc" style="left:1063px;top:371px;">Incident</div>
<div class="a" style="left:1132px;top:370px;width:87px;height:24px;border:1px solid #f8c4c4;border-radius:3px;overflow:hidden"><div class="a" style="left:0;top:2px;width:20px;height:21px;background:#fcc9c9"></div></div>
<div class="tc" style="left:1158px;top:372px;">Medium</div>
<div class="tc" style="left:1235px;top:371px;">Schuppe Ardith</div>
<svg class="ii" style="left:1344px;top:374px" width="7" height="15" viewBox="0 0 7 15"><circle cx="3.6" cy="2" r="1.9" fill="#3558a3"/><path d="M0.5,5.3 H4.8 V12.3 H6.5 V14.8 H0.3 V12.3 H2 V7.6 H0.5 Z" fill="#3558a3"/></svg>
<div class="tc" style="left:1410px;top:371px;">30-06-2021<br>14:28</div>
<div class="tc" style="left:1515px;top:371px;">2</div>
<div class="a" style="left:0;top:419px;width:1637px;height:57px;background:#f4f6fa;border-bottom:1px solid #e6e8eb"></div>
<div class="cb" style="left:16px;top:431px"></div>
<div class="tc" style="left:48px;top:428px;">222<br>995</div>
<div class="tc tl" style="left:97px;top:428px;">seize cross-media<br>eyeballs</div>
<div class="tc" style="left:268px;top:428px;">ROOT</div>
<svg style="left:520px;top:430px" width="15" height="15" viewBox="0 0 15 15"><circle cx="7.5" cy="7.5" r="6.5" stroke="#41b84a" stroke-width="1.9" fill="none"/></svg>
<div class="tc" style="left:539px;top:428px;">Processing (assigned)</div>
<div class="tc" style="left:697px;top:428px;">18-06-2021<br>11:39</div>
<div class="tc" style="left:1063px;top:428px;">Request</div>
<div class="a" style="left:1132px;top:427px;width:87px;height:24px;border:1px solid #f8c4c4;border-radius:3px;overflow:hidden"><div class="a" style="left:0;top:2px;width:20px;height:21px;background:#fcc9c9"></div></div>
<div class="tc" style="left:1158px;top:429px;">Medium</div>
<div class="tc" style="left:1235px;top:428px;">Delaunay Alexandre</div>
<svg class="ii" style="left:1376px;top:431px" width="7" height="15" viewBox="0 0 7 15"><circle cx="3.6" cy="2" r="1.9" fill="#3558a3"/><path d="M0.5,5.3 H4.8 V12.3 H6.5 V14.8 H0.3 V12.3 H2 V7.6 H0.5 Z" fill="#3558a3"/></svg>
<div class="tc" style="left:1410px;top:428px;">22-06-2021<br>11:01</div>
<div class="tc" style="left:1515px;top:428px;">5</div>
<div class="a" style="left:0;top:476px;width:1637px;height:57px;background:#fff;border-bottom:1px solid #e6e8eb"></div>
<div class="cb" style="left:16px;top:488px"></div>
<div class="tc" style="left:48px;top:485px;">222<br>985</div>
<div class="tc tl" style="left:97px;top:485px;">monetize end-to-end<br>bandwidth</div>
<div class="tc" style="left:268px;top:485px;">ROOT</div>
<svg style="left:520px;top:487px" width="15" height="15" viewBox="0 0 15 15"><circle cx="7.5" cy="7.5" r="6.5" stroke="#41b84a" stroke-width="1.9" fill="none"/></svg>
<div class="tc" style="left:539px;top:485px;">Processing (assigned)</div>
<div class="tc" style="left:697px;top:485px;">29-03-2021<br>16:04</div>
<div class="tc" style="left:1063px;top:485px;">Request</div>
<div class="a" style="left:1132px;top:484px;width:64px;height:24px;border:1px solid #ff6363;border-radius:3px;overflow:hidden"><div class="a" style="left:0;top:2px;width:20px;height:21px;background:#ff6868"></div></div>
<div class="tc" style="left:1158px;top:486px;">High</div>
<div class="tc" style="left:1235px;top:485px;">Delaunay Alexandre</div>
<svg class="ii" style="left:1376px;top:488px" width="7" height="15" viewBox="0 0 7 15"><circle cx="3.6" cy="2" r="1.9" fill="#3558a3"/><path d="M0.5,5.3 H4.8 V12.3 H6.5 V14.8 H0.3 V12.3 H2 V7.6 H0.5 Z" fill="#3558a3"/></svg>
<div class="tc" style="left:1235px;top:505px;">Bippin Alf</div>
<svg class="ii" style="left:1306px;top:508px" width="7" height="15" viewBox="0 0 7 15"><circle cx="3.6" cy="2" r="1.9" fill="#3558a3"/><path d="M0.5,5.3 H4.8 V12.3 H6.5 V14.8 H0.3 V12.3 H2 V7.6 H0.5 Z" fill="#3558a3"/></svg>
<div class="tc" style="left:1410px;top:485px;">08-06-2021<br>14:09</div>
<div class="tc" style="left:1515px;top:485px;">1</div>
</div><svg style="left:287px;top:402px" width="13" height="21" viewBox="0 0 13 21"><path d="M4,1 H12.7 L11.3,3.3 H8 V15 H4 Z" fill="#1f2a3a"/><path d="M0,15 H11 L5.5,20.8 Z" fill="#1f2a3a"/></svg>
<div class="a" style="left:304px;top:397px;width:58px;height:22px;border:1px solid #e0e3e8;border-radius:2px;background:#fff"></div>
<div class="a" style="left:313px;top:398px;line-height:22px;font-size:12px;color:#56688e">Actions</div>
<div class="a" style="left:375px;top:400px;width:32px;height:17px;border:1px solid #d9dce1;border-radius:9px;background:#fff"></div>
<div class="a" style="left:378px;top:402.5px;width:12px;height:12px;border-radius:6px;background:#e4e5e8"></div>
<svg style="left:410px;top:400px" width="16" height="16" viewBox="0 0 16 16"><circle cx="8" cy="8" r="8" fill="#6cb2ea"/><path d="M3,3.5 C4.5,2.5 6.5,2.3 7.5,3 C7,4.3 5.5,4.5 5.8,6 C6.5,7 4.5,8 3,7.2 C2.2,6 2.2,4.5 3,3.5 Z M8.5,8.5 C10,8 11.5,9 11,10.5 C10.5,12 9.5,13.5 8.8,14 C8,13 8.2,11.5 7.5,10.5 C7.2,9.5 7.7,8.8 8.5,8.5 Z M11.5,3 C12.5,3.8 13.5,5 13.8,6.5 C12.8,6.5 12,5.5 11.2,5 Z" fill="#fff"/></svg>
<div class="a" style="left:440px;top:400px;width:32px;height:17px;border:1px solid #d9dce1;border-radius:9px;background:#fff"></div>
<div class="a" style="left:443px;top:402.5px;width:12px;height:12px;border-radius:6px;background:#e4e5e8"></div>
<svg style="left:476px;top:400px" width="14" height="16" viewBox="0 0 14 16"><rect x="0" y="1.3" width="14" height="1.8" fill="#c9a08c"/><rect x="4.5" y="0" width="5" height="1.5" fill="#c9a08c"/><path d="M1,3.8 H13 L12.3,16 H1.7 Z" fill="#c9a08c"/><path d="M4.3,6 V14 M7,6 V14 M9.7,6 V14" stroke="#e8d5cc" stroke-width="1"/></svg>
<div class="a" style="left:504px;top:400px;width:32px;height:17px;border-radius:9px;background:#fcc55d"></div>
<div class="a" style="left:521px;top:402px;width:13px;height:13px;border-radius:7px;background:#fff"></div>
<svg style="left:540px;top:400px" width="17" height="16" viewBox="0 0 17 16"><circle cx="6.7" cy="6.6" r="5.2" stroke="#56688e" stroke-width="2.2" fill="none"/><path d="M10.5,10.5 L15.6,15.5" stroke="#56688e" stroke-width="2.4"/></svg>
<svg style="left:574px;top:400px" width="16" height="16" viewBox="0 0 16 16"><path d="M10.5,0.5 C8,0.8 6.5,3 7.3,5.6 L0.8,12.3 C0,13.1 0,14.3 0.8,15.1 C1.6,15.9 2.8,15.9 3.6,15.1 L10.2,8.6 C12.8,9.4 15.2,7.8 15.5,5.2 L12.8,7.2 L9.6,6.2 L8.9,3.2 Z" fill="#56688e"/><circle cx="2.2" cy="13.7" r="0.9" fill="#fff"/></svg>
<svg style="left:612px;top:400px" width="12" height="16" viewBox="0 0 12 16"><path d="M0,0 H7.5 V4.5 H12 V16 H0 Z" fill="#56688e"/><path d="M8.3,0 L12,3.7 H8.3 Z" fill="#56688e"/><path d="M6,7 V12.3 M3,9.5 L6,12.5 L9,9.5" stroke="#fff" stroke-width="1.9" fill="none"/></svg>
<svg style="left:627px;top:406px" width="8" height="6" viewBox="0 0 8 6"><path d="M1,1 L4,4.3 L7,1" stroke="#8b97ad" stroke-width="1.1" fill="none"/></svg>
<div class="a" style="left:1702px;top:397px;line-height:22px;font-size:14.5px;color:#2b2f36">Show</div>
<div class="a" style="left:1746px;top:397px;width:87px;height:22px;border:1px solid #dfe2e7;border-radius:2px;background:#fff"></div>
<div class="a" style="left:1759px;top:397px;line-height:22px;font-size:11.5px;color:#2b2f36">50</div>
<svg style="left:1809px;top:405px" width="11" height="7" viewBox="0 0 11 7"><path d="M1,1 L5.5,5.5 L10,1" stroke="#c5c9d0" stroke-width="1.1" fill="none"/></svg>
<div class="a" style="left:1841px;top:397px;line-height:22px;font-size:14.5px;color:#2b2f36">entries</div>

<div class="cb" style="left:279px;top:479px;width:16px;height:17px"></div>
<div class="th" style="left:311px;top:482px">ID</div>
<div class="th" style="left:360px;top:482px">TITLE</div>
<div class="th" style="left:531px;top:482px">ENTITY</div>
<div class="th" style="left:783px;top:482px">STATUS</div>
<div class="th" style="left:960px;top:482px">OPENING DATE</div>
<div class="th" style="left:1065px;top:482px">CATEGORY</div>
<div class="th" style="left:1326px;top:482px">TYPE</div>
<div class="th" style="left:1395px;top:482px">PRIORITY</div>
<div class="th" style="left:1498px;top:482px">REQUESTER - REQUESTER</div>
<div class="th" style="left:1673px;top:482px">LAST UPDATE</div>
<svg style="left:1743px;top:483px" width="9" height="5" viewBox="0 0 9 5"><path d="M0,0 H9 L4.5,5 Z" fill="#606876"/></svg>
<div class="th" style="left:1778px;top:444px">FOLLOWUPS -</div>
<div class="th" style="left:1778px;top:460px">NUMBER OF</div>
<div class="th" style="left:1778px;top:482px">FOLLOWUPS</div>

<div class="a" style="left:263px;top:1018px;width:1637px;height:1px;background:#e3e5e8"></div>
<div class="a" style="left:279px;top:1036px;line-height:20px;font-size:14.8px;color:#5b6270">Showing 1 to 50 of 327 entries</div>
<svg style="left:1668px;top:1040px" width="14" height="11" viewBox="0 0 14 11"><path d="M6,1 L2,5.5 L6,10 M12,1 L8,5.5 L12,10" stroke="#b4bac5" stroke-width="2" fill="none"/></svg>
<svg style="left:1699px;top:1040px" width="8" height="11" viewBox="0 0 8 11"><path d="M6,1 L2,5.5 L6,10" stroke="#b4bac5" stroke-width="2" fill="none"/></svg>
<div class="a" style="left:1717px;top:1031px;width:28px;height:28px;border-radius:3px;background:#fdc95c;color:#fff;font-size:14.5px;line-height:28px;text-align:center">1</div>
<div class="a" style="left:1751px;top:1031px;width:15px;line-height:28px;font-size:14.5px;color:#5b6270;text-align:center">2</div>
<div class="a" style="left:1779px;top:1031px;width:15px;line-height:28px;font-size:14.5px;color:#5b6270;text-align:center">3</div>
<div class="a" style="left:1807px;top:1031px;width:16px;line-height:28px;font-size:10px;color:#a5abb6;text-align:center">...</div>
<svg style="left:1839px;top:1040px" width="8" height="11" viewBox="0 0 8 11"><path d="M2,1 L6,5.5 L2,10" stroke="#3f4a5e" stroke-width="2" fill="none"/></svg>
<svg style="left:1864px;top:1040px" width="14" height="11" viewBox="0 0 14 11"><path d="M2,1 L6,5.5 L2,10 M8,1 L12,5.5 L8,10" stroke="#3f4a5e" stroke-width="2" fill="none"/></svg>

<div class="a" style="left:1894px;top:77px;width:6px;height:262px;border-radius:3px;background:#c8c9c9"></div>
<svg style="left:700px;top:64px" width="14" height="21" viewBox="0 0 14 21"><path d="M1,1 V17 L4.8,13.5 L7.5,19.8 L10,18.7 L7.4,12.6 L12.5,12.4 Z" fill="#fff" stroke="#222" stroke-width="1.1" stroke-linejoin="round"/></svg>

<div class="a" style="left:0;top:1079px;width:1902px;height:1px;background:#e3e4e7"></div>
</body></html>
